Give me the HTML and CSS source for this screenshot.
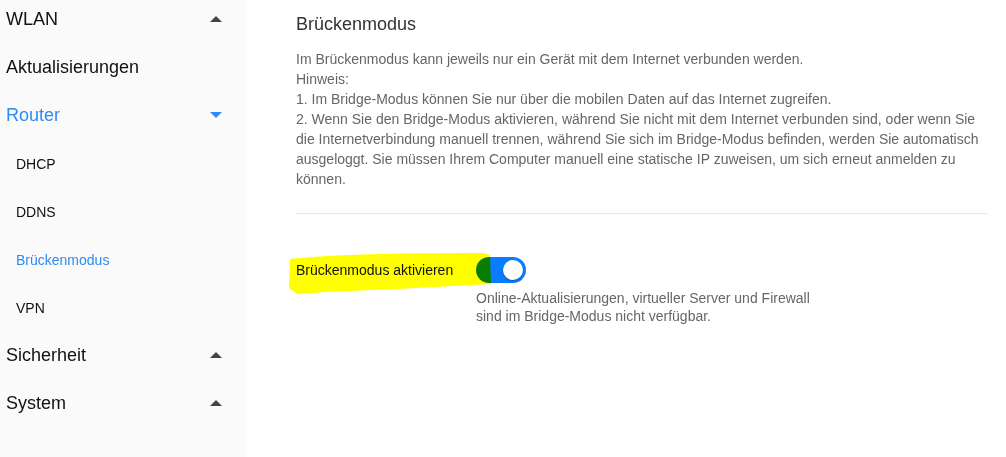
FILE: index.html
```html
<html lang="de">
<head>
    <meta charset="UTF-8">
    <title>Brückenmodus</title>
    <link rel="stylesheet" href="styles.css">
</head>
<body>
    <div id="page">
        <ul id="menu">
            <li class="top"><span>WLAN</span><i class="arrow up"></i></li>
            <li class="top"><span>Aktualisierungen</span></li>
            <li class="top active"><span>Router</span><i class="arrow down"></i></li>
            <li class="sub">DHCP</li>
            <li class="sub">DDNS</li>
            <li class="sub active">Brückenmodus</li>
            <li class="sub">VPN</li>
            <li class="top"><span>Sicherheit</span><i class="arrow up"></i></li>
            <li class="top"><span>System</span><i class="arrow up"></i></li>
        </ul>
        <section id="main">
            <h2 class="title">Brückenmodus</h2>
            <div class="info">
                Im Brückenmodus kann jeweils nur ein Gerät mit dem Internet verbunden werden.<br>
                Hinweis:<br>
                1. Im Bridge-Modus können Sie nur über die mobilen Daten auf das Internet zugreifen.<br>
                2. Wenn Sie den Bridge-Modus aktivieren, während Sie nicht mit dem Internet verbunden sind, oder wenn Sie die Internetverbindung manuell trennen, während Sie sich im Bridge-Modus befinden, werden Sie automatisch ausgeloggt. Sie müssen Ihrem Computer manuell eine statische IP zuweisen, um sich erneut anmelden zu können.
            </div>
            <hr class="line">
            <div class="row">
                <span class="label">Brückenmodus aktivieren</span>
                <div class="control">
                    <div class="switch"><span class="knob"></span></div>
                    <p class="hint">Online-Aktualisierungen, virtueller Server und Firewall<br>sind im Bridge-Modus nicht verfügbar.</p>
                </div>
                <!-- marker stroke drawn over label -->
                <svg class="marker" width="210" height="46" viewBox="0 0 210 46">
                    <path d="M3 9 C50 4 120 3 196 3 L203 5 L204 34 C150 37 90 40 40 42 L10 44 L2 38 Z" fill="#ffff00"/>
                </svg>
            </div>
        </section>
    </div>
</body>
</html>
```

FILE: styles.css
```css
body {
    margin: 0;
    font-family: "Liberation Sans", Arial, sans-serif;
    background-color: #fff;
}
#page {
    display: flex;
    height: 457px;
}
#menu {
    width: 246px;
    background-color: #fafafa;
    list-style-type: none;
    margin: 0;
    padding: 0;
}
#menu li {
    height: 48px;
    display: flex;
    align-items: center;
    justify-content: space-between;
}
.top {
    font-size: 18px;
    color: #111;
    padding: 0 24px 0 6px;
    margin-top: -5px;
    margin-bottom: 5px;
}
.sub {
    font-size: 14px;
    color: #111;
    padding-left: 16px;
    margin-top: -4px;
    margin-bottom: 4px;
}
#menu .active {
    color: #2d8cf0;
}
.arrow {
    width: 0;
    height: 0;
    border-left: 6px solid transparent;
    border-right: 6px solid transparent;
}
.up {
    border-bottom: 6px solid #444;
}
.down {
    border-top: 6px solid #2d8cf0;
}
#main {
    width: 691px;
    padding: 0 19px 0 50px;
}
.title {
    font-size: 18px;
    font-weight: normal;
    color: #333;
    margin: 14px 0 0;
    line-height: 20px;
}
.info {
    font-size: 14px;
    color: #666;
    line-height: 20px;
    margin-top: 15px;
}
.line {
    border: none;
    border-top: 1px solid #e8e8e8;
    margin: 24px 0 0;
}
.row {
    position: relative;
    display: flex;
    margin-top: 43px;
}
.label {
    width: 180px;
    font-size: 14px;
    color: #111;
    line-height: 26px;
    position: relative;
    z-index: 1;
}
.switch {
    width: 50px;
    height: 26px;
    border-radius: 13px;
    background-color: #0a7cff;
    position: relative;
}
.knob {
    position: absolute;
    right: 3px;
    top: 3px;
    width: 20px;
    height: 20px;
    border-radius: 50%;
    background-color: #fff;
    box-shadow: 0 1px 2px rgba(0,0,0,0.3);
}
.hint {
    font-size: 14px;
    color: #666;
    line-height: 18px;
    margin: 6px 0 0;
}
.marker {
    position: absolute;
    left: -9px;
    top: -7px;
    mix-blend-mode: multiply;
}
```
